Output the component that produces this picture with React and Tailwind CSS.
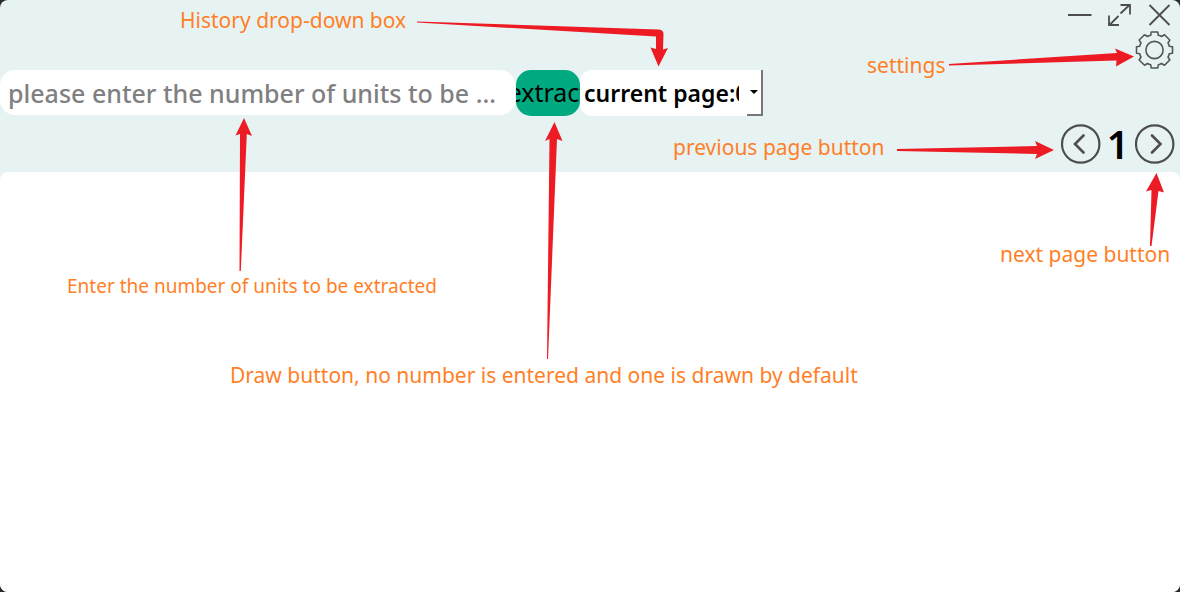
const label =
  "absolute whitespace-nowrap font-['Noto_Sans',sans-serif] leading-8 text-[#ff7f27]";

function WindowControls() {
  return (
    <div className="flex justify-end gap-3 pr-1.5 text-[#4d4d4d]">
      <button type="button" aria-label="Minimize" className="h-8 w-7">
        <svg viewBox="0 0 28 32" className="h-8 w-7" fill="none" stroke="currentColor" strokeWidth="2">
          <path d="M2 15h23.500" />
        </svg>
      </button>
      <button type="button" aria-label="Maximize" className="h-8 w-7">
        <svg viewBox="0 0 28 32" className="h-8 w-7" fill="none" stroke="currentColor" strokeWidth="1.800">
          <path d="M14.500 13.500 23.500 5M14.500 5h9.500v9.500M12.500 16 3.500 25M3 15.500V25h10" />
        </svg>
      </button>
      <button type="button" aria-label="Close" className="h-8 w-7">
        <svg viewBox="0 0 28 32" className="h-8 w-7" fill="none" stroke="currentColor" strokeWidth="1.800">
          <path d="M3.500 5l20 20M23.500 5 3.500 25" />
        </svg>
      </button>
    </div>
  );
}

function GearIcon() {
  return (
    <svg viewBox="0 0 40 40" className="size-10" fill="none" stroke="#555" strokeWidth="1.600" strokeLinejoin="round">
      <circle cx="19.500" cy="20" r="8.600" />
      <path
        transform="translate(-.5 0)"
        d="M16.700 2h6.600l.5 3.300q2 .3 3.200 1.200L30 4.700 35.300 10 33.500 13q.9 1.200 1.200 3.200l3.300.5v6.600l-3.300.5q-.3 2-1.200 3.200L35.300 30 30 35.300 27 33.500q-1.200.9-3.200 1.200l-.5 3.300h-6.600l-.5-3.300q-2-.3-3.200-1.200L10 35.300 4.700 30 6.500 27q-.9-1.200-1.200-3.200L2 23.300v-6.600l3.300-.5q.3-2 1.200-3.200L4.700 10 10 4.700 13 6.500q1.200-.9 3.200-1.200z"
      />
    </svg>
  );
}

function PageButton({ name, d }) {
  return (
    <button type="button" aria-label={name} className="size-10">
      <svg viewBox="0 0 40 40" className="size-10" fill="none" stroke="#4d4d4d" strokeWidth="2.200">
        <circle cx="19.700" cy="20" r="18.700" />
        <path d={d} strokeWidth="2.600" strokeLinecap="round" />
      </svg>
    </button>
  );
}

function Toolbar() {
  return (
    <div className="flex items-start">
      <input
        type="text"
        aria-label="Number of units"
        placeholder="please enter the number of units to be …"
        className="h-[45px] w-[515px] min-w-0 rounded-[15px] bg-white px-2 font-['Noto_Sans',sans-serif] text-[25px] font-medium text-ellipsis outline-none placeholder:text-[#808080]"
      />
      <button
        type="button"
        className="ml-px flex h-[46px] w-16 shrink-0 items-center justify-center overflow-hidden rounded-[15px] bg-[#00a97f] font-['Noto_Sans',sans-serif] text-[25px] text-black"
      >
        extract
      </button>
      <div className="relative flex h-[46px] w-[183px] shrink-0">
        <select
          aria-label="History"
          className="w-full appearance-none rounded-l-[12px] bg-white pr-6 pl-1 font-['Noto_Sans',sans-serif] text-[23px] font-semibold text-black outline-none"
        >
          <option>current page:0</option>
        </select>
        <span className="pointer-events-none absolute inset-y-0 right-0 flex w-4 items-center justify-center border-r-2 border-b-2 border-[#777]">
          <svg viewBox="0 0 8 4" className="h-1 w-2">
            <path d="M0 0h8L4 4z" />
          </svg>
        </span>
      </div>
    </div>
  );
}

function Arrows() {
  return (
    <svg
      viewBox="0 0 1180 592"
      width="1180"
      height="592"
      className="pointer-events-none absolute top-0 left-0"
      fill="#ed1c24"
      aria-hidden="true"
    >
      <path d="M417 21.500 658 29.500Q663.500 29.500 663.500 34L663 49.500 668 48 658.500 66.500 650.500 47.500 656 49V36.500L417 22.500z" />
      <path d="M244 118 252 136 246.800 134 240.800 271H239.500L240 134 235.500 135.500z" />
      <path d="M554.500 122 562.500 141 557 139 548 359H547L549.500 139 545 141z" />
      <path d="M949 64 1117 53 1115 48.500 1134 56.500 1116 66.500 1116.500 60.500 949 65.500z" />
      <path d="M897 149 1037 146 1035 141 1054 150 1035 159 1037 154 897 151z" />
      <path d="M1156.500 173 1164 192.500 1158.500 191 1151.500 246H1150L1151.500 190 1146 191.500z" />
    </svg>
  );
}

export default function App() {
  return (
    <div className="relative flex min-h-screen flex-col bg-[#2b2b2b]">
      <div className="flex flex-1 flex-col rounded-lg bg-[#e7f3f3]">
        <header className="flex h-[172px] flex-col">
          <WindowControls />
          <div className="-mt-0.5 flex h-10 justify-end pr-[5px]">
            <button type="button" aria-label="Settings" className="size-10">
              <GearIcon />
            </button>
          </div>
          <Toolbar />
          <nav aria-label="Pages" className="mt-2 flex items-center justify-end gap-1.5 pr-[5px]">
            <PageButton name="Previous page" d="M22.500 11.500 14 20l8.500 8.500" />
            <span className="font-['Noto_Sans',sans-serif] text-[39px] leading-10 font-semibold">1</span>
            <PageButton name="Next page" d="M17 11.500 25.500 20 17 28.500" />
          </nav>
        </header>
        <main className="flex-1 rounded-lg bg-white" />
      </div>

      <Arrows />
      <span className={`${label} top-1 left-[180px] text-[21px]`}>History drop-down box</span>
      <span className={`${label} top-[49px] left-[867px] text-[21px]`}>settings</span>
      <span className={`${label} top-[131px] left-[673px] text-[21px]`}>previous page button</span>
      <span className={`${label} top-[238px] left-[1000px] text-[21px]`}>next page button</span>
      <span className={`${label} top-[270px] left-[67px] text-[19px]`}>Enter the number of units to be extracted</span>
      <span className={`${label} top-[359px] left-[230px] text-[21px]`}>
        Draw button, no number is entered and one is drawn by default
      </span>
    </div>
  );
}
